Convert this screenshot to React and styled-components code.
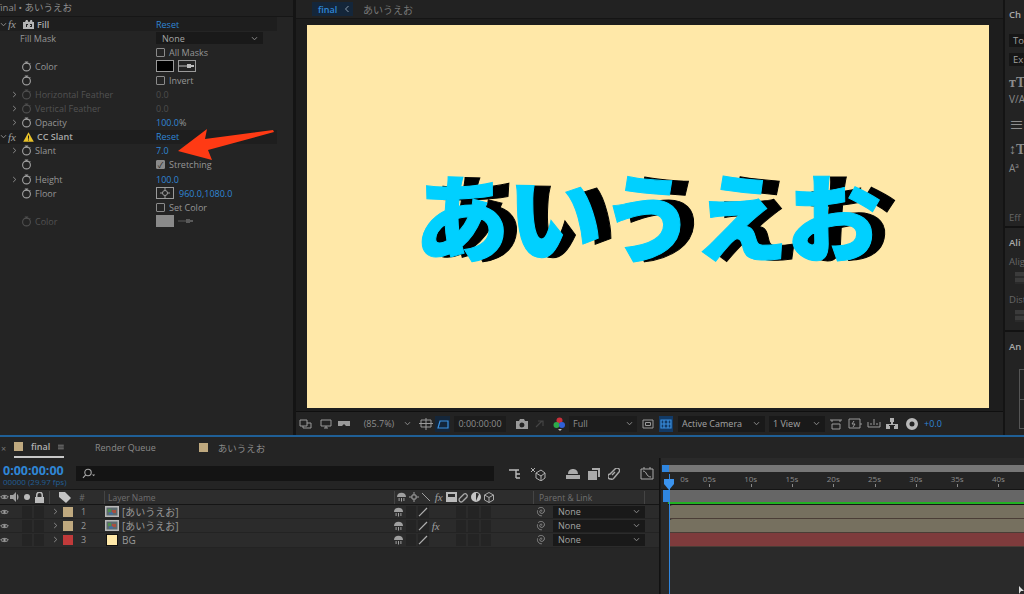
import React from 'react';
import styled, { createGlobalStyle } from 'styled-components';

const FONT = '"Open Sans", "Noto Sans", "Noto Sans CJK JP", sans-serif';
const BLUE = '#2f86d6';

const Global = createGlobalStyle`
  html, body { margin: 0; padding: 0; background: #141414; }
  body { font-family: ${FONT}; font-size: 9px; color: #9a9a9a; overflow: hidden; }
  * { box-sizing: border-box; }
`;

const Page = styled.div`
  width: 1024px;
  height: 594px;
  display: flex;
  flex-direction: column;
  overflow: hidden;
  background: #141414;
`;

const Top = styled.div`
  height: 435px;
  display: flex;
  flex: none;
`;

const Spacer = styled.span`
  width: ${(p) => p.$w}px;
  flex: none;
`;

/* ---------- effect controls ---------- */
const EffectPanel = styled.section`
  width: 293px;
  height: 100%;
  background: #242424;
  flex: none;
  margin-right: 3px;
  overflow: hidden;
`;

const PanelTitle = styled.div`
  height: 17px;
  padding-bottom: 2px;
  display: flex;
  align-items: center;
  font-size: 9.5px;
  color: #8f8f8f;
  background: #202020;
  border-bottom: 1px solid #161616;
  overflow: hidden;
`;

const TitleText = styled.span`
  margin-left: -3px;
  white-space: nowrap;
`;

const Rows = styled.div`
  width: 277px;
`;

const EffectRow = styled.div`
  height: 14.1px;
  display: flex;
  align-items: center;
  background: ${(p) => (p.$head ? '#1e1e1e' : 'transparent')};
  color: ${(p) => (p.$dim ? '#525252' : '#969696')};
`;

const NameCell = styled.div`
  width: 156px;
  flex: none;
  display: flex;
  align-items: center;
  padding-left: ${(p) => p.$indent || 0}px;
`;

const TwirlSlot = styled.span`
  width: 21px;
  flex: none;
  padding-left: 11px;
  display: flex;
`;

const WatchSlot = styled.span`
  width: 14px;
  flex: none;
  display: flex;
`;

const HeadName = styled.b`
  font-weight: 600;
  color: #a8a8a8;
  margin-left: ${(p) => p.$gap || 4}px;
`;

const FxMark = styled.i`
  font-family: "Liberation Serif", serif;
  font-size: 11px;
  color: #a0a0a0;
  margin-left: ${(p) => (p.$bare ? 0 : 1)}px;
  width: ${(p) => (p.$bare ? 'auto' : '14px')};
`;

const Value = styled.span`
  color: ${(p) => (p.$dim ? '#4c4c4c' : BLUE)};
  margin-left: ${(p) => p.$gap || 0}px;
`;

const ValueCell = styled.div`
  display: flex;
  align-items: center;
  flex: 1;
`;

const Check = styled.span`
  width: 9px;
  height: 9px;
  border: 1px solid #8a8a8a;
  border-radius: 1px;
  margin-right: 4px;
  background: ${(p) => (p.$on ? '#8a8a8a' : 'transparent')};
  color: #1e1e1e;
  font-size: 8px;
  line-height: 7px;
  text-align: center;
`;

const Select = styled.div`
  display: flex;
  align-items: center;
  justify-content: space-between;
  width: ${(p) => p.$w}px;
  height: ${(p) => p.$h || 12}px;
  margin-left: ${(p) => p.$gap || 0}px;
  padding: 0 5px 0 ${(p) => p.$pad || 6}px;
  background: #191919;
  color: #a4a4a4;
  flex: none;
`;

const ColorBox = styled.span`
  width: 18px;
  height: 12px;
  background: ${(p) => p.$c};
  border: 1px solid ${(p) => (p.$plain ? p.$c : '#9a9a9a')};
  margin-right: 4px;
  flex: none;
  display: flex;
  align-items: center;
  justify-content: center;
`;

const Pointer = styled.svg`
  position: absolute;
  left: 170px;
  top: 122px;
`;

const LeftWrap = styled.div`
  position: relative;
  flex: none;
`;

/* ---------- viewer ---------- */
const Viewer = styled.section`
  flex: none;
  width: 707px;
  display: flex;
  flex-direction: column;
  background: #1d1d1d;
  margin-right: 2px;
`;

const ViewerTabs = styled.div`
  height: 19px;
  padding-left: 16px;
  display: flex;
  align-items: center;
  background: #222;
  border-bottom: 1px solid #151515;
  flex: none;
`;

const CompCrumb = styled.span`
  width: 41px;
  height: 14px;
  background: #14263a;
  color: ${BLUE};
  display: flex;
  align-items: center;
  justify-content: space-between;
  padding: 0 3px 0 6px;
  font-weight: 600;
  margin-right: 10px;
`;

const Crumb = styled.span`
  font-size: 10px;
  color: #777;
`;

const StageWrap = styled.div`
  height: 393px;
  padding: 6px 14px 3px 11px;
  flex: none;
  border-bottom: 1px solid #0f0f0f;
`;

const Stage = styled.div`
  height: 100%;
  background: #ffe8a8;
  display: flex;
  align-items: center;
  justify-content: center;
  isolation: isolate;
`;

/* the cyan layer stays upright, its black copy is the one CC Slant shears */
const BigText = styled.div`
  position: relative;
  font-family: "Noto Sans CJK JP", sans-serif;
  font-weight: 900;
  font-size: 95px;
  line-height: 1;
  letter-spacing: -2px;
  color: #00d0ff;
  -webkit-text-stroke: 1px #00d0ff;
  white-space: nowrap;
  margin: -6px 2px 0 0;
  &::before {
    content: attr(data-text);
    position: absolute;
    left: 0;
    top: 0;
    z-index: -1;
    color: #000;
    -webkit-text-stroke: 1px #000;
    transform: translateX(15px) skewX(-4deg);
  }
`;

const ViewerBar = styled.div`
  flex: 1;
  display: flex;
  align-items: center;
  background: #232323;
  padding-left: 3px;
  color: #8e8e8e;
`;

const BarSlot = styled.span`
  width: ${(p) => p.$w}px;
  flex: none;
  height: 16px;
  display: flex;
  align-items: center;
  justify-content: ${(p) => (p.$split ? 'space-between' : 'center')};
  padding: 0 ${(p) => (p.$split ? 4 : 0)}px;
  background: ${(p) => p.$bg || 'transparent'};
  margin-left: ${(p) => p.$gap || 0}px;
  color: ${(p) => p.$c || 'inherit'};
`;

/* ---------- right panels ---------- */
const Side = styled.aside`
  flex: 1;
  background: #232323;
  display: flex;
  flex-direction: column;
  overflow: hidden;
  white-space: nowrap;
  font-size: 9.5px;
`;

const SideBlock = styled.div`
  height: ${(p) => p.$h}px;
  flex: none;
  padding: ${(p) => p.$top || 0}px 0 0 4px;
  border-bottom: ${(p) => (p.$end ? '2px solid #121212' : 'none')};
  overflow: hidden;
`;

const SideTitle = styled.div`
  font-weight: 600;
  color: #a8a8a8;
  height: ${(p) => p.$h || 14}px;
`;

const SideField = styled.div`
  width: 24px;
  height: 13px;
  margin-top: ${(p) => p.$gap || 0}px;
  background: #161616;
  color: #a0a0a0;
  padding-left: 4px;
  line-height: 13px;
`;

const SideGlyph = styled.div`
  font-family: ${(p) => (p.$serif ? '"Liberation Serif", serif' : FONT)};
  font-weight: ${(p) => (p.$serif ? 700 : 400)};
  font-size: ${(p) => p.$s || 12}px;
  line-height: ${(p) => p.$h || 14}px;
  margin-top: ${(p) => p.$gap || 0}px;
  color: #8c8c8c;
`;

const SideLabel = styled.div`
  color: #666;
  margin-top: ${(p) => p.$gap || 0}px;
`;

const GhostBars = styled.div`
  width: 20px;
  height: 12px;
  margin: 4px 0 0 6px;
  background: repeating-linear-gradient(#3b3b3b 0 4px, #2a2a2a 4px 6px);
`;

const AnchorBox = styled.div`
  width: 30px;
  height: 60px;
  margin: 15px 0 0 10px;
  border: 1px solid #555;
  background: linear-gradient(#555, #555) 0 50% / 100% 1px no-repeat;
`;

/* ---------- timeline ---------- */
const Timeline = styled.section`
  flex: 1;
  border-top: 2px solid #1f5f96;
  background: #262626;
  display: flex;
  flex-direction: column;
  position: relative;
`;

const TabRow = styled.div`
  height: 21px;
  flex: none;
  display: flex;
  align-items: center;
  background: #242424;
  color: #8a8a8a;
`;

const CompTab = styled.div`
  height: 21px;
  width: 50px;
  margin: 0 31px 0 14px;
  display: flex;
  align-items: center;
  gap: 8px;
  border-bottom: 2px solid #c8c8c8;
  color: #b0b0b0;
  font-weight: 600;
`;

const CloseMark = styled.span`
  position: absolute;
  left: 1px;
  top: 5px;
  color: #777;
`;

const Chip = styled.span`
  width: ${(p) => p.$s || 9}px;
  height: ${(p) => p.$s || 9}px;
  background: ${(p) => p.$c};
  flex: none;
  ${(p) => p.$framed && 'outline: 1px solid #111; margin: 0 2px;'}
`;

const PlainTab = styled.span`
  margin-left: ${(p) => p.$gap || 0}px;
  margin-right: ${(p) => p.$after || 0}px;
  font-size: ${(p) => p.$s || 9}px;
`;

const TimelineBody = styled.div`
  flex: 1;
  display: flex;
`;

const LayerSide = styled.div`
  width: 660px;
  flex: none;
  border-right: 1px solid #111;
  display: flex;
  flex-direction: column;
`;

const TimeRow = styled.div`
  height: 31px;
  display: flex;
  background: #242424;
`;

const TimeCol = styled.div`
  width: 76px;
  flex: none;
  padding: 6px 0 0 3px;
`;

const TimeCode = styled.div`
  font-size: 12.5px;
  font-weight: 700;
  line-height: 13px;
  color: ${BLUE};
`;

const FrameCount = styled.div`
  font-size: 8px;
  line-height: 10px;
  color: #215f96;
  white-space: nowrap;
`;

const Search = styled.div`
  width: 418px;
  height: 15px;
  margin-top: 8px;
  background: #141414;
  padding: 2px 0 0 6px;
  flex: none;
`;

const Tools = styled.div`
  display: flex;
  align-items: center;
  margin-top: 8px;
  height: 15px;
  padding-left: 14px;
  gap: 8px;
`;

const HeaderRow = styled.div`
  height: 16px;
  display: flex;
  align-items: center;
  background: #2d2d2d;
  border-top: 1px solid #151515;
  border-bottom: 1px solid #151515;
  color: #6f6f6f;
  font-size: 8.5px;
`;

const LayerRow = styled.div`
  height: 14.2px;
  display: flex;
  align-items: center;
  background: #2b2b2b;
  border-bottom: 1px solid #232323;
  color: #989898;
`;

const Cell = styled.span`
  width: ${(p) => p.$w}px;
  height: 12px;
  flex: none;
  display: flex;
  align-items: center;
  justify-content: ${(p) => (p.$end ? 'flex-end' : 'center')};
  background: ${(p) => (p.$box ? '#242424' : 'transparent')};
  background-clip: content-box;
  padding: 0 ${(p) => (p.$box ? 1 : 0)}px;
  margin-left: ${(p) => p.$gap || 0}px;
`;

const NameSlot = styled.span`
  flex: none;
  width: ${(p) => p.$w}px;
  display: flex;
  align-items: center;
  gap: 3px;
  font-size: ${(p) => p.$s || 10}px;
  white-space: nowrap;
`;

const ParentLabel = styled.span`
  width: 105px;
  flex: none;
`;

const Divider = styled.span`
  width: 1px;
  height: 13px;
  background: #444;
  flex: none;
  margin-right: ${(p) => p.$after || 0}px;
  margin-left: ${(p) => p.$before || 0}px;
`;

const TrackSide = styled.div`
  flex: 1;
  display: flex;
  flex-direction: column;
  background: #2a2a2a;
  position: relative;
  overflow: hidden;
  border-left: 1px solid #1a1a1a;
`;

const NavBar = styled.div`
  margin-top: 7px;
  height: 7px;
  background: #777;
  flex: none;
  margin-left: 1px;
  border-left: 7px solid #2f86e0;
`;

const Ruler = styled.div`
  height: 18px;
  flex: none;
  display: flex;
  background: #242424;
  border-bottom: 1px solid #151515;
  font-size: 8px;
  color: #8a8a8a;
`;

const Tick = styled.span`
  width: ${(p) => (p.$first ? 27.7 : 41.3)}px;
  flex: none;
  text-align: ${(p) => (p.$first ? 'right' : 'center')};
  padding-top: 1px;
  line-height: 11px;
  position: relative;
  &::after {
    content: '';
    position: absolute;
    left: 50%;
    bottom: 2px;
    width: 1px;
    height: 3px;
    background: #8a8a8a;
    display: ${(p) => (p.$first ? 'none' : 'block')};
  }
`;

const WorkArea = styled.div`
  height: 12px;
  flex: none;
  background: #666;
  margin-left: 2px;
  border-left: 6px solid #2f86e0;
`;

const GreenLine = styled.div`
  height: 3px;
  flex: none;
  background: #22b022;
  margin-left: 7px;
  border-bottom: 1px solid #161616;
`;

const TrackBar = styled.div`
  height: 14.1px;
  flex: none;
  margin-left: 8px;
  background: ${(p) => p.$c};
  border-bottom: 1px solid #4a3d36;
  border-top-left-radius: ${(p) => (p.$round ? 4 : 0)}px;
`;

const PlayLine = styled.div`
  position: absolute;
  left: 8px;
  top: 16px;
  bottom: 0;
  width: 1px;
  background: #2f86e0;
`;

const PlayHead = styled.svg`
  position: absolute;
  left: 3px;
  top: 21px;
`;

const Cursor = styled.svg`
  position: absolute;
  right: 0;
  bottom: 0;
`;

/* ---------- icons ---------- */
const Chevron = ({ down, c = '#8a8a8a' }) => (
  <svg width="7" height="7" viewBox="0 0 7 7" fill="none" stroke={c} strokeWidth="1">
    {down ? <path d="M1 2.2 3.5 4.8 6 2.2" /> : <path d="M2.2 1 4.8 3.5 2.2 6" />}
  </svg>
);

const Watch = ({ dim }) => (
  <svg width="11" height="11" viewBox="0 0 11 11" fill="none" stroke={dim ? '#4f4f4f' : '#a0a0a0'} strokeWidth="1.1">
    <circle cx="5.5" cy="6" r="3.9" />
    <path d="M3.8 1h3.4M5.5 1v1.3M8.6 2.4l.7.7" />
  </svg>
);

const Eye = () => (
  <svg width="11" height="8" viewBox="0 0 11 8" fill="none" stroke="#a8a8a8" strokeWidth="1.2">
    <path d="M.8 4C2.6 1.4 8.4 1.4 10.2 4 8.4 6.6 2.6 6.6.8 4Z" />
    <circle cx="5.5" cy="4" r="1" fill="#a8a8a8" />
  </svg>
);

const Shy = ({ c = '#a0a0a0' }) => (
  <svg width="11" height="10" viewBox="0 0 11 10" fill={c}>
    <path d="M1 5C1 2 3 .8 5.5.8S10 2 10 5Z" />
    <path d="M2.6 6h1v3h-1zM5 6h1v3.4H5zM7.4 6h1v3h-1z" />
  </svg>
);

const Slash = () => (
  <svg width="10" height="10" viewBox="0 0 10 10" stroke="#b0b0b0" strokeWidth="1.2">
    <path d="M1 9.2 9 1" />
  </svg>
);

const Spiral = () => (
  <svg width="11" height="11" viewBox="0 0 11 11" fill="none" stroke="#8a8a8a">
    <path d="M5.6 5.6c.9-.7.2-1.8-.8-1.5-1.5.4-1.5 3 .5 3.3 2.3.3 3.7-2 2.9-4C7.3 1.2 4 .8 2.2 2.6" />
    <path d="M1.6 4.4C.8 7.4 3 10 5.8 9.8" />
  </svg>
);

const LayerThumb = () => (
  <svg width="14" height="11" viewBox="0 0 14 11">
    <rect width="14" height="11" fill="#b9b9b9" />
    <rect x="1.5" y="1.5" width="11" height="8" fill="#5d6a6e" />
    <rect x="3" y="3" width="3" height="3" fill="#4f8f4a" />
    <rect x="7" y="4" width="4" height="3" fill="#a8503f" />
    <rect x="4" y="6.5" width="4" height="2" fill="#3f6ea8" />
  </svg>
);

const Glass = () => (
  <svg width="14" height="11" viewBox="0 0 14 11" fill="none" stroke="#a8a8a8" strokeWidth="1.1">
    <circle cx="6" cy="4.5" r="3.2" />
    <path d="M3.7 6.8 1 9.8" />
    <path d="M10 6.5h3.2l-1.6 1.7Z" fill="#a8a8a8" stroke="none" />
  </svg>
);

const Icon = ({ w = 14, h = 12, d, fill, c = '#9a9a9a', sw = 1 }) => (
  <svg width={w} height={h} viewBox={`0 0 ${w} ${h}`} fill={fill ? c : 'none'} stroke={fill ? 'none' : c} strokeWidth={sw}>
    <path d={d} />
  </svg>
);

const ColorDots = () => (
  <svg width="13" height="14" viewBox="0 0 13 14">
    <circle cx="6.5" cy="3.5" r="3" fill="#c8303a" />
    <circle cx="3.5" cy="8" r="3" fill="#2fa84a" />
    <circle cx="9" cy="8" r="3" fill="#3060d8" />
    <path d="M5 12h4l-2 2Z" fill="#bbb" />
  </svg>
);

const FillBadge = () => (
  <svg width="11" height="9" viewBox="0 0 11 9">
    <path d="M0 2h2l1-2h1.5l1 2h1l1-2H9l.5 2H11v7H0Z" fill="#b5b5b5" />
    <path d="M3 4h2v1H4v2H3ZM7 4h2v3H7V6h1V5H7Z" fill="#242424" />
  </svg>
);

const Warn = () => (
  <svg width="11" height="10" viewBox="0 0 11 10">
    <path d="M5.5.3 10.8 9.7H.2Z" fill="#e8c22a" />
    <path d="M5 3.5h1v3.2H5ZM5 7.4h1v1.1H5Z" fill="#1e1e1e" />
  </svg>
);

const Dropper = ({ dim }) => (
  <svg width="16" height="6" viewBox="0 0 16 6" fill={dim ? '#5a5a5a' : '#bdbdbd'}>
    <rect x="0" y="2.5" width="9" height="1" />
    <path d="M8 1h4v1h3v2h-3v1H8Z" />
  </svg>
);

const Target = () => (
  <svg width="12" height="10" viewBox="0 0 12 10" fill="none" stroke="#9a9a9a">
    <circle cx="6" cy="5" r="2.5" />
    <path d="M6 0v3M6 7v3M1 5h3M8 5h3" />
  </svg>
);

const effects = [
  { head: true, name: 'Fill', badge: <FillBadge />, reset: true, gap: 3 },
  { indent: 20, label: 'Fill Mask', select: 'None' },
  { check: 'All Masks' },
  { watch: true, label: 'Color', color: true },
  { watch: true, check: 'Invert' },
  { twirl: true, watch: true, dim: true, label: 'Horizontal Feather', value: '0.0' },
  { twirl: true, watch: true, dim: true, label: 'Vertical Feather', value: '0.0' },
  { twirl: true, watch: true, label: 'Opacity', value: '100.0', suffix: '%' },
  { head: true, name: 'CC Slant', badge: <Warn />, reset: true, gap: 3 },
  { twirl: true, watch: true, label: 'Slant', value: '7.0' },
  { watch: true, check: 'Stretching', on: true },
  { twirl: true, watch: true, label: 'Height', value: '100.0' },
  { watch: true, label: 'Floor', point: '960.0,1080.0' },
  { check: 'Set Color' },
  { watch: true, dim: true, label: 'Color', grey: true },
];

const EffectLine = ({ e }) => {
  if (e.head) {
    return (
      <EffectRow $head>
        <NameCell>
          <Chevron down />
          <FxMark>fx</FxMark>
          <Spacer $w={1} />
          {e.badge}
          <HeadName $gap={e.gap}>{e.name}</HeadName>
        </NameCell>
        <Value>Reset</Value>
      </EffectRow>
    );
  }
  return (
    <EffectRow $dim={e.dim}>
      <NameCell $indent={e.indent}>
        {!e.indent && <TwirlSlot>{e.twirl && <Chevron />}</TwirlSlot>}
        {!e.indent && <WatchSlot>{e.watch && <Watch dim={e.dim} />}</WatchSlot>}
        {e.label}
      </NameCell>
      <ValueCell>
        {e.select && (
          <Select $w={107}>
            {e.select}
            <Chevron down />
          </Select>
        )}
        {e.check && (
          <>
            <Check $on={e.on}>{e.on ? '✓' : ''}</Check>
            {e.check}
          </>
        )}
        {e.color && (
          <>
            <ColorBox $c="#000" />
            <ColorBox $c="transparent"><Dropper /></ColorBox>
          </>
        )}
        {e.grey && (
          <>
            <ColorBox $c="#8a8a8a" $plain />
            <Dropper dim />
          </>
        )}
        {e.value && <Value $dim={e.dim}>{e.value}</Value>}
        {e.suffix}
        {e.point && (
          <>
            <ColorBox $c="transparent"><Target /></ColorBox>
            <Value $gap={1}>{e.point}</Value>
          </>
        )}
      </ValueCell>
    </EffectRow>
  );
};

const layers = [
  { n: 1, chip: '#bfa97f', name: '[あいうえお]', comp: true },
  { n: 2, chip: '#bfa97f', name: '[あいうえお]', comp: true, fx: true },
  { n: 3, chip: '#c13a3a', name: 'BG' },
];

const times = ['0s', '05s', '10s', '15s', '20s', '25s', '30s', '35s', '40s'];

const App = () => (
  <Page>
    <Global />
    <Top>
      <LeftWrap>
        <EffectPanel>
          <PanelTitle><TitleText>final • あいうえお</TitleText></PanelTitle>
          <Rows>
            {effects.map((e, i) => (
              <EffectLine key={i} e={e} />
            ))}
          </Rows>
        </EffectPanel>
        <Pointer width="106" height="42" viewBox="0 0 106 42">
          <path d="M8 29 37 7 35 17 103 8 104 10 38 28 42 38Z" fill="#ff3a14" />
        </Pointer>
      </LeftWrap>
      <Viewer>
        <ViewerTabs>
          <CompCrumb>
            final
            <svg width="6" height="8" viewBox="0 0 6 8" fill="none" stroke="#8a9aaa"><path d="M4.5 1 1.5 4l3 3" /></svg>
          </CompCrumb>
          <Crumb>あいうえお</Crumb>
        </ViewerTabs>
        <StageWrap>
          <Stage>
            <BigText data-text="あいうえお">あいうえお</BigText>
          </Stage>
        </StageWrap>
        <ViewerBar>
          <BarSlot $w={14}><Icon d="M1 2h7v6H1ZM4 8v2h8V5H8" /></BarSlot>
          <BarSlot $w={18} $gap={4}><Icon d="M2 2h10v6H2ZM5 10h4M7 8v2" /></BarSlot>
          <BarSlot $w={18}><Icon d="M1 3h12v5H9L7 6 5 8H1Z" fill /></BarSlot>
          <BarSlot $w={44} $gap={4}>(85.7%)</BarSlot>
          <BarSlot $w={12}><Chevron down /></BarSlot>
          <BarSlot $w={18} $gap={4}><Icon d="M2 2h10v7H2ZM7 0v12M0 5.5h14" /></BarSlot>
          <BarSlot $w={15} $bg="#14263a"><Icon c="#3a90e0" sw={1.2} d="M2 10 4 3h8v7Z" /></BarSlot>
          <BarSlot $w={52} $gap={4} $bg="#1c1c1c">0:00:00:00</BarSlot>
          <BarSlot $w={16} $gap={8}><Icon fill d="M1 3h3l1-2h4l1 2h3v8H1Zm6 1.5a2.5 2.5 0 1 0 0 5 2.5 2.5 0 0 0 0-5Z" /></BarSlot>
          <BarSlot $w={16} $gap={2}><Icon c="#444" sw={1.2} d="M3 9 9 3M5 3h5v5" /></BarSlot>
          <BarSlot $w={16} $gap={3}><ColorDots /></BarSlot>
          <BarSlot $w={68} $split $bg="#1c1c1c" $gap={2}>
            Full
            <Chevron down />
          </BarSlot>
          <BarSlot $w={14} $gap={4}><Icon d="M2 2h10v8H2Z M4.5 4.5h5v3h-5Z" /></BarSlot>
          <BarSlot $w={14} $gap={4} $bg="#123a66"><Icon c="#3a90e0" sw={1.2} d="M2 2h10v8H2ZM5 2v8M9 2v8M2 6h10" /></BarSlot>
          <Select $w={87} $h={16} $gap={5} $pad={4}>
            Active Camera
            <Chevron down />
          </Select>
          <Select $w={56} $h={16} $gap={4} $pad={4}>
            1 View
            <Chevron down />
          </Select>
          <BarSlot $w={16} $gap={3}><Icon d="M1 2h12M3 2v2M11 2v2M3 6h8v5H3Z" /></BarSlot>
          <BarSlot $w={16} $gap={3}><Icon d="M1 1h11v9H1ZM6 3 4 6h3L5 9M12 6h2" /></BarSlot>
          <BarSlot $w={16} $gap={3}><Icon d="M1 4v5h12V4M4 7V5M7 7V1M10 7V5" /></BarSlot>
          <BarSlot $w={16} $gap={2}><Icon fill c="#b0b0b0" d="M5 0h4v4H8v2h5v5H9V8h1V7H4v1h1v3H1V6h5V4H5Z" /></BarSlot>
          <BarSlot $w={16} $gap={4}><Icon fill c="#b8b8b8" d="M7 0a6 6 0 1 1 0 12A6 6 0 0 1 7 0Zm0 3.5a2.5 2.5 0 1 0 0 5 2.5 2.5 0 0 0 0-5Z" /></BarSlot>
          <BarSlot $w={22} $gap={2} $c={BLUE}>+0.0</BarSlot>
        </ViewerBar>
      </Viewer>
      <Side>
        <SideBlock $h={228} $top={8} $end>
          <SideTitle $h={26}>Ch</SideTitle>
          <SideField>To</SideField>
          <SideField $gap={6}>Ex</SideField>
          <SideGlyph $serif $s={14} $gap={9} $h={16}>тT</SideGlyph>
          <SideGlyph $s={10} $gap={1} $h={14}>V/A</SideGlyph>
          <SideGlyph $s={15} $gap={9} $h={18}>≡</SideGlyph>
          <SideGlyph $serif $s={14} $gap={9} $h={16}>↕T</SideGlyph>
          <SideGlyph $s={10} $gap={3} $h={14}>Aª</SideGlyph>
          <SideLabel $gap={36}>Eff</SideLabel>
        </SideBlock>
        <SideBlock $h={104} $top={8} $end>
          <SideTitle>Ali</SideTitle>
          <SideLabel $gap={5}>Alig</SideLabel>
          <GhostBars />
          <SideLabel $gap={9}>Dist</SideLabel>
          <GhostBars />
        </SideBlock>
        <SideBlock $h={101} $top={8}>
          <SideTitle>An</SideTitle>
          <AnchorBox />
        </SideBlock>
      </Side>
    </Top>
    <Timeline>
      <TabRow>
        <CloseMark>×</CloseMark>
        <CompTab>
          <Chip $c="#bfa97f" />
          final
          <Icon w={8} h={8} c="#999" d="M0 1.5h8M0 4h8M0 6.5h8" />
        </CompTab>
        <PlainTab $after={43}>Render Queue</PlainTab>
        <Chip $c="#bfa97f" />
        <PlainTab $gap={10} $s={9.5}>あいうえお</PlainTab>
      </TabRow>
      <TimelineBody>
        <LayerSide>
          <TimeRow>
            <TimeCol>
              <TimeCode>0:00:00:00</TimeCode>
              <FrameCount>00000 (29.97 fps)</FrameCount>
            </TimeCol>
            <Search><Glass /></Search>
            <Tools>
              <Icon d="M1 2h5M6 2h5M8 2v8M8 6h4M8 10h4" c="#bbb" sw={1.4} />
              <Icon w={16} h={14} d="M6 6 11 3l4 3v5l-4 3-5-3ZM6 6l5 3 4-3M11 9v5M1 1l4 4M5 1 1 5" c="#b0b0b0" />
              <Spacer $w={4} />
              <Icon fill w={14} h={12} c="#aaa" d="M2 6C2 2 5 1 7 1s5 1 5 5ZM0 7h14v4H0Z" />
              <Icon fill w={12} h={12} c="#aaa" d="M4 0h8v9h-2V2H4ZM0 3h9v9H0Z" />
              <Icon w={12} h={12} c="#aaa" sw={1.4} d="M3 11a2.5 2.5 0 0 1-1-5l5-5a2.5 2.5 0 0 1 4 3L6 10a2.5 2.5 0 0 1-3 1ZM4 7l3-3" />
              <Spacer $w={4} />
              <Icon w={14} h={13} c="#aaa" d="M1 2h12v10H1ZM3 4c4 0 3 6 8 6M4 0v2M10 0v2" />
            </Tools>
          </TimeRow>
          <HeaderRow>
            <Cell $w={9} $end><Eye /></Cell>
            <Cell $w={12}><Icon w={10} h={10} fill c="#a0a0a0" d="M0 3h3l3-3v10L3 7H0ZM7 2c2 1 2 5 0 6Z" /></Cell>
            <Cell $w={12}><Icon w={8} h={8} fill c="#bbb" d="M4 1a3 3 0 1 1 0 6 3 3 0 0 1 0-6Z" /></Cell>
            <Cell $w={12}><Icon w={9} h={11} fill c="#bbb" d="M0 5h1V3a3.5 3.5 0 0 1 7 0v2h1v6H0Zm2.5 0h4V3a2 2 0 0 0-4 0Z" /></Cell>
            <Divider $before={4} $after={9} />
            <Cell $w={12}><Icon w={12} h={11} fill c="#c4c4c4" d="M0 0h6l6 6-5 5-7-6Z" /></Cell>
            <Cell $w={22}>#</Cell>
            <Divider $before={11} $after={3} />
            <NameSlot $w={286} $s={8.5}>Layer Name</NameSlot>
            <Divider />
            <Cell $w={12.5}><Shy /></Cell>
            <Cell $w={12.5}><Icon w={10} h={10} c="#a0a0a0" d="M5 0v3M5 7v3M0 5h3M7 5h3M3 3h4v4H3Z" /></Cell>
            <Cell $w={12.5}><Icon w={10} h={10} c="#a0a0a0" d="M1 1l8 8" /></Cell>
            <Cell $w={12.5}><FxMark $bare>fx</FxMark></Cell>
            <Cell $w={12.5}><Icon w={11} h={10} fill c="#bbb" d="M0 0h11v10H0Zm2 2v3h7V2Z" /></Cell>
            <Cell $w={12.5}><Icon w={11} h={11} c="#aaa" sw={1.3} d="M3 10a2.2 2.2 0 0 1-1-4l4-4a2.2 2.2 0 0 1 3 3L5 9a2.2 2.2 0 0 1-2 1Z" /></Cell>
            <Cell $w={12.5}><Icon w={10} h={10} fill c="#c4c4c4" d="M5 0a5 5 0 1 1 0 10A5 5 0 0 1 5 0Zm0 1v8l3-7a4 4 0 0 0-3-1Z" /></Cell>
            <Cell $w={12.5}><Icon w={10} h={11} c="#aaa" d="M5 .5l4.5 2.5v5L5 10.5.5 8V3ZM.5 3 5 5.5 9.5 3M5 5.5v5" /></Cell>
            <Divider $before={38} $after={5} />
            <ParentLabel>Parent &amp; Link</ParentLabel>
            <Divider />
          </HeaderRow>
          {layers.map((l) => (
            <LayerRow key={l.n}>
              <Cell $w={9} $end><Eye /></Cell>
              <Cell $w={12} />
              <Cell $w={12} $box />
              <Cell $w={12} $box />
              <Cell $w={14} $end><Chevron /></Cell>
              <Cell $w={18}><Chip $c={l.chip} $s={10} /></Cell>
              <Cell $w={13}>{l.n}</Cell>
              <Cell $w={15} />
              <NameSlot $w={286}>
                {l.comp ? <LayerThumb /> : <Chip $c="#ffe8a8" $s={10} $framed />}
                {l.name}
              </NameSlot>
              <Cell $w={12.5} $gap={1}><Shy /></Cell>
              <Cell $w={12.5} $box />
              <Cell $w={12.5} $box><Slash /></Cell>
              <Cell $w={12.5}>{l.fx && <FxMark $bare>fx</FxMark>}</Cell>
              <Cell $w={12.5} />
              <Cell $w={12.5} $box />
              <Cell $w={12.5} $box />
              <Cell $w={12.5} $box />
              <Cell $w={43} />
              <Cell $w={13}><Spiral /></Cell>
              <Select $w={92} $gap={5} $pad={5}>
                None
                <Chevron down />
              </Select>
            </LayerRow>
          ))}
        </LayerSide>
        <TrackSide>
          <NavBar />
          <Ruler>
            {times.map((t) => (
              <Tick key={t} $first={t === '0s'}>{t}</Tick>
            ))}
          </Ruler>
          <WorkArea />
          <GreenLine />
          <TrackBar $c="#76705f" $round />
          <TrackBar $c="#76705f" $round />
          <TrackBar $c="#7e3b3c" />
          <PlayLine />
          <PlayHead width="10" height="12" viewBox="0 0 10 12">
            <path d="M0 0h10v5L5 11 0 5Z" fill="#3b93ee" />
          </PlayHead>
          <Cursor width="5" height="8" viewBox="0 0 5 8">
            <path d="M0 0 5 5H2L0 8Z" fill="#ddd" />
          </Cursor>
        </TrackSide>
      </TimelineBody>
    </Timeline>
  </Page>
);

export default App;
